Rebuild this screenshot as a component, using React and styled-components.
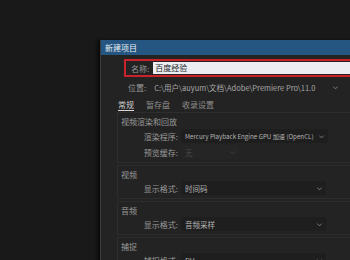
import React from 'react'
import styled, { createGlobalStyle } from 'styled-components'

const Global = createGlobalStyle`
    body{
        margin:0;
        background:#191919;
        font-family:"Noto Sans CJK SC","Liberation Sans",sans-serif;
    }
`
const Page = styled.div`
    width:350px;
    height:260px;
    overflow:hidden;
    padding:40px 0 0 100px;
    box-sizing:border-box;
`
const Dialog = styled.div`
    width:290px;
    height:240px;
    background:#232323;
    border-left:1px solid #3b3b3b;
    box-shadow:-3px 0 3px rgba(0,0,0,0.55);
`
const TitleBar = styled.div`
    height:15px;
    background:#255681;
    color:#e8eef4;
    font-size:8px;
    line-height:15px;
    padding-left:4px;
`
const Body = styled.div`
    display:flex;
    flex-direction:column;
    padding:4px 0 0 23px;
`
const NameBox = styled.div`
    display:flex;
    align-items:center;
    height:14px;
    border:2px solid #c9222b;
    border-right:none;
    padding:0 0 0 5px;
    gap:4px;
`
const Label = styled.span`
    color:#9a9a9a;
    font-size:8px;
    line-height:11px;
    white-space:nowrap;
    ${({ w }) => w && `width:${w}px;text-align:right;`}
`
const NameInput = styled.div`
    flex:1;
    height:12px;
    background:#eceef2;
    color:#222;
    font-size:8px;
    line-height:12px;
    padding-left:2px;
`
const LocationRow = styled.div`
    display:flex;
    align-items:center;
    height:12px;
    margin-top:4px;
    padding-left:4px;
    gap:8px;
`
const Path = styled.span`
    color:#a8a8a8;
    font-size:7.5px;
    white-space:nowrap;
    width:170px;
`
const Chevron = styled.svg`
    width:7px;
    height:7px;
    flex:none;
`
const Circle = styled.div`
    width:10px;
    height:10px;
    border:1px solid #777;
    border-radius:50%;
    flex:none;
    margin-left:3px;
`
const Tabs = styled.div`
    display:flex;
    gap:12px;
    height:12px;
    margin:6px 0 0 -6px;
`
const Tab = styled.span`
    color:${({ active }) => (active ? '#cfcfcf' : '#8e8e8e')};
    font-size:8px;
    line-height:11px;
    border-bottom:1px solid ${({ active }) => (active ? '#d8d8d8' : 'transparent')};
`
const Group = styled.div`
    display:flex;
    flex-direction:column;
    border:1px solid #2d2d2d;
    border-right:none;
    margin-left:-7px;
    margin-top:${({ mt }) => mt || 0}px;
    padding:3px 0 3px 3px;
    gap:${({ gap }) => gap || 1}px;
`
const GroupTitle = styled.span`
    color:#9a9a9a;
    font-size:8px;
    line-height:11px;
`
const Row = styled.div`
    display:flex;
    align-items:center;
    gap:3px;
`
const Select = styled.div`
    display:flex;
    align-items:center;
    justify-content:space-between;
    width:${({ w }) => w}px;
    height:14px;
    background:${({ disabled }) => (disabled ? '#252525' : '#1e1e1e')};
    border-radius:2px;
    padding:0 3px 0 4px;
    box-sizing:border-box;
    color:${({ disabled }) => (disabled ? '#4a4a4a' : '#b4b4b4')};
    font-size:${({ small }) => (small ? 6.2 : 7.5)}px;
    white-space:nowrap;
`

const Down = ({ color = '#8a8a8a' }) => (
    <Chevron viewBox="0 0 8 8">
        <path d="M1.5 3 L4 5.5 L6.5 3" fill="none" stroke={color} strokeWidth="1" />
    </Chevron>
)

const App = () => {
    return (
        <Page>
            <Global />
            <Dialog>
                <TitleBar>新建项目</TitleBar>
                <Body>
                    <NameBox>
                        <Label>名称:</Label>
                        <NameInput>百度经验</NameInput>
                    </NameBox>
                    <LocationRow>
                        <Label>位置:</Label>
                        <Path>C:\用户\auyum\文档\Adobe\Premiere Pro\11.0</Path>
                        <Down />
                        <Circle />
                    </LocationRow>
                    <Tabs>
                        <Tab active>常规</Tab>
                        <Tab>暂存盘</Tab>
                        <Tab>收录设置</Tab>
                    </Tabs>
                    <Group mt={1} gap={2}>
                        <GroupTitle>视频渲染和回放</GroupTitle>
                        <Row>
                            <Label w={57}>渲染程序:</Label>
                            <Select w={147} small>
                                Mercury Playback Engine GPU 加速 (OpenCL)
                                <Down />
                            </Select>
                        </Row>
                        <Row>
                            <Label w={57}>预览缓存:</Label>
                            <Select w={58} disabled>
                                无
                                <Down color="#444" />
                            </Select>
                        </Row>
                    </Group>
                    <Group mt={2}>
                        <GroupTitle>视频</GroupTitle>
                        <Row>
                            <Label w={57}>显示格式:</Label>
                            <Select w={145}>
                                时间码
                                <Down />
                            </Select>
                        </Row>
                    </Group>
                    <Group mt={2}>
                        <GroupTitle>音频</GroupTitle>
                        <Row>
                            <Label w={57}>显示格式:</Label>
                            <Select w={145}>
                                音频采样
                                <Down />
                            </Select>
                        </Row>
                    </Group>
                    <Group mt={2}>
                        <GroupTitle>捕捉</GroupTitle>
                        <Row>
                            <Label w={57}>捕捉格式:</Label>
                            <Select w={145}>
                                DV
                                <Down />
                            </Select>
                        </Row>
                    </Group>
                </Body>
            </Dialog>
        </Page>
    )
}

export default App
